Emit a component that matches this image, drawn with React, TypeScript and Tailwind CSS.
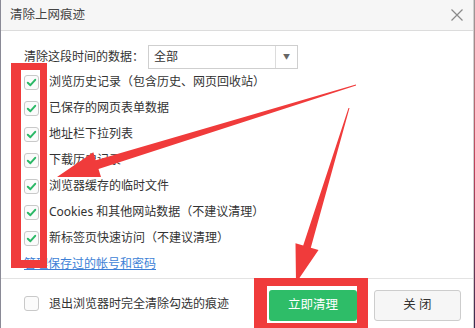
import React from 'react'

const font = { fontFamily: '"Noto Sans", "Noto Sans CJK SC", sans-serif' }

const items = [
  '浏览历史记录（包含历史、网页回收站）',
  '已保存的网页表单数据',
  '地址栏下拉列表',
  '下载历史记录',
  '浏览器缓存的临时文件',
  'Cookies 和其他网站数据（不建议清理）',
  '新标签页快速访问（不建议清理）',
]

function Check({ on }: { on: boolean }) {
  return (
    <span className="w-[15px] h-[15px] rounded-[3px] border border-[#c9c9c9] bg-[#fbfbfb] flex items-center justify-center shrink-0">
      {on && (
        <svg width="11" height="11" viewBox="0 0 11 11">
          <path d="M1.8 5.8 L4.4 8.2 L9.2 2.8" fill="none" stroke="#2bb866" strokeWidth="2" strokeLinecap="round" strokeLinejoin="round" />
        </svg>
      )}
    </span>
  )
}

// tapered annotation arrow from tail to tip
function arrowPoints(tx: number, ty: number, hx: number, hy: number, w0: number, w1: number, headLen: number, headW: number) {
  const dx = hx - tx
  const dy = hy - ty
  const L = Math.hypot(dx, dy)
  const ux = dx / L
  const uy = dy / L
  const nx = -uy
  const ny = ux
  const bx = hx - ux * headLen
  const by = hy - uy * headLen
  const p = (x: number, y: number) => `${x.toFixed(1)},${y.toFixed(1)}`
  return [
    p(tx + (nx * w0) / 2, ty + (ny * w0) / 2),
    p(bx + (nx * w1) / 2, by + (ny * w1) / 2),
    p(bx + (nx * headW) / 2, by + (ny * headW) / 2),
    p(hx, hy),
    p(bx - (nx * headW) / 2, by - (ny * headW) / 2),
    p(bx - (nx * w1) / 2, by - (ny * w1) / 2),
    p(tx - (nx * w0) / 2, ty - (ny * w0) / 2),
  ].join(' ')
}

export default function App() {
  return (
    <div className="w-[475px] h-[328px] flex bg-white overflow-hidden" style={font}>
      <div className="relative flex-1 flex flex-col border-l border-[#8a8a96] border-r border-r-[#d0d0d0] text-[12px] text-[#333]">
        {/* Title bar */}
        <div className="h-[31px] bg-[#f6f6f6] border-b border-[#dcdcdc] flex items-center justify-between pl-[9px] pr-[9px] shrink-0">
          <span className="text-[12.5px] text-[#444]">清除上网痕迹</span>
          <svg width="14" height="14" viewBox="0 0 14 14">
            <path d="M1.5 1.5 L12.5 12.5 M12.5 1.5 L1.5 12.5" stroke="#8a8a8a" strokeWidth="1.2" />
          </svg>
        </div>

        {/* Body */}
        <div className="flex-1 flex flex-col pl-[23px] pr-4">
          <div className="mt-[14px] h-[24px] flex items-center">
            <span className="w-[124px]">清除这段时间的数据：</span>
            <div className="w-[150px] h-[24px] border border-[#cfcfcf] flex items-center">
              <span className="flex-1 pl-[5px]">全部</span>
              <span className="w-[22px] h-full border-l border-[#dcdcdc] flex items-center justify-center text-[7px] text-[#666]">▼</span>
            </div>
          </div>
          <div className="flex flex-col">
            {items.map((t) => (
              <div key={t} className="h-[26px] flex items-center gap-[10px]">
                <Check on />
                <span>{t}</span>
              </div>
            ))}
          </div>
          <div className="h-[26px] flex items-center">
            <span className="text-[#3d7fd6] underline">管理保存过的帐号和密码</span>
          </div>
        </div>

        {/* Footer */}
        <div className="h-[50px] border-t border-[#e3e3e3] flex items-center pl-[23px] pr-[12px] shrink-0">
          <Check on={false} />
          <span className="ml-[10px] flex-1">退出浏览器时完全清除勾选的痕迹</span>
          <button className="w-[88px] h-[31px] rounded-[3px] bg-[#2ebd68] text-white text-[12.5px] mt-[3px]">立即清理</button>
          <button className="ml-[17px] w-[87px] h-[31px] rounded-[3px] bg-[#f6f6f6] border border-[#cdcdcd] text-[12.5px] text-[#333] mt-[3px]">关 闭</button>
        </div>

        {/* Annotations */}
        <div className="absolute left-[10px] top-[63px] w-[36px] h-[205px] border-t-[7px] border-b-[8px] border-l-[10px] border-r-[7px] border-[#f03b3b] pointer-events-none" />
        <div className="absolute left-[253px] top-[278px] w-[114px] h-[52px] border-t-[8px] border-b-[7px] border-l-[13px] border-r-[11px] border-[#f03b3b] pointer-events-none" />
        <svg className="absolute inset-0 pointer-events-none" width="475" height="328">
          <polygon points={arrowPoints(355, 85, 56, 177, 1, 9, 42, 26)} fill="#f03b3b" />
          <polygon points={arrowPoints(348, 108, 295, 283, 1, 8, 38, 24)} fill="#f03b3b" />
        </svg>
      </div>
      <div className="w-[1px] bg-gradient-to-b from-[#9a9a9a] via-[#c0405a] to-[#3a2a50]" />
    </div>
  )
}
